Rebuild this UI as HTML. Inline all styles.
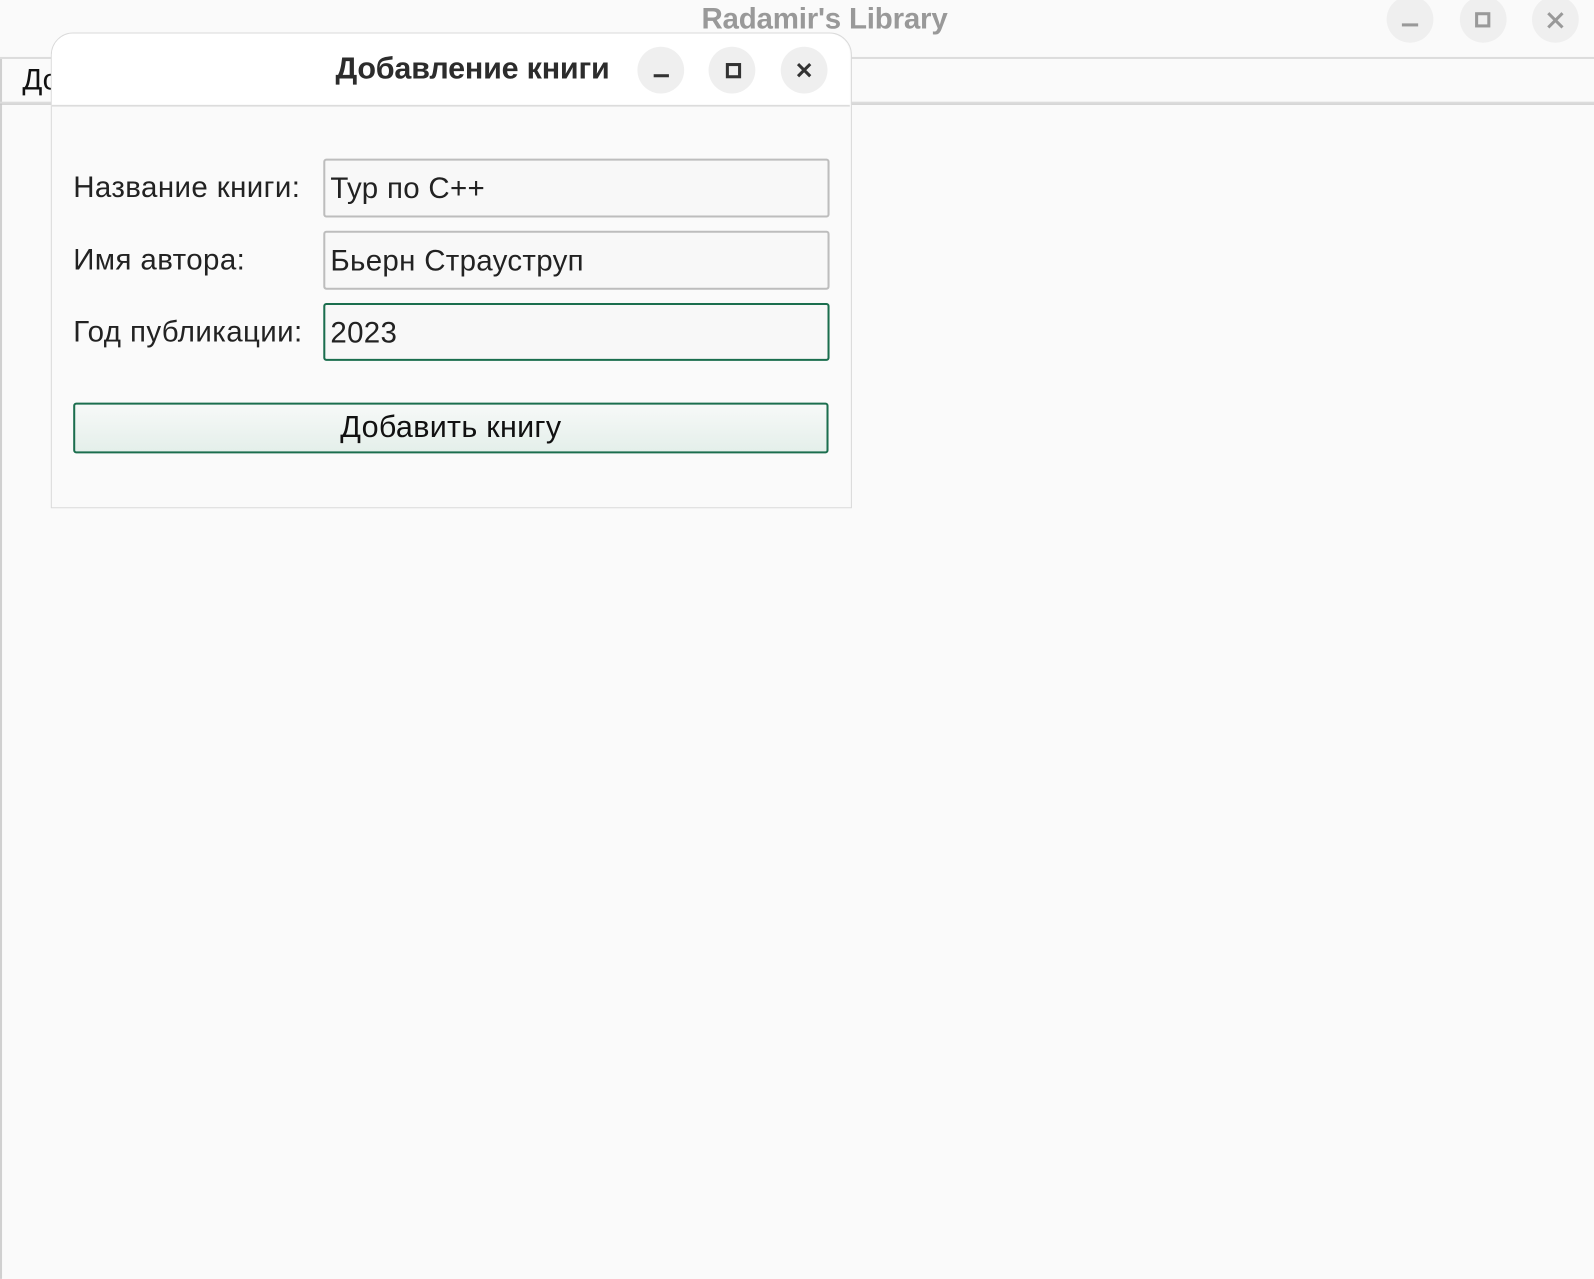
<!DOCTYPE html>
<html><head><meta charset="utf-8"><style>
body{margin:0;width:1594px;height:1258px;background:#fafafa;position:relative;overflow:hidden;font-family:"Liberation Sans","DejaVu Sans",sans-serif;color:#222}
#w{position:absolute;left:0;top:0;width:1568px;height:1238px;transform:scale(1.0166);transform-origin:0 0}
.abs{position:absolute}
.circ{position:absolute;width:46px;height:46px;border-radius:50%;background:#efefef}
.lbl{position:absolute;left:72px;font-size:29px;letter-spacing:0.4px;color:#222}
.inp{position:absolute;left:318px;width:494px;height:54px;border:2px solid #bdbdbd;border-radius:3px;background:#f8f8f8;box-sizing:content-box}
.inp span{position:absolute;left:5px;top:12px;font-size:29px;letter-spacing:0.3px;color:#222}
</style></head><body><div id="w">
<div class="abs" style="left:0;top:0;width:2px;height:1258px;background:#d0d0d0"></div>
<div class="abs" style="left:0;top:0;width:1594px;height:56px;background:#fafafa;border-bottom:2px solid #dcdcdc"></div>
<div class="abs" style="left:690px;top:3px;font-size:29px;font-weight:bold;color:#999;letter-spacing:-0.2px">Radamir's Library</div>
<div class="circ" style="left:1364px;top:-4px"></div><div class="abs" style="left:1379px;top:23px;width:16px;height:3px;background:#999"></div>
<div class="circ" style="left:1436px;top:-4px"></div><div class="abs" style="left:1451px;top:12px;width:9px;height:9px;border:3px solid #999"></div>
<div class="circ" style="left:1507px;top:-4px"></div>
<svg class="abs" style="left:1520px;top:10px" width="20" height="20"><path d="M3 3L17 17M17 3L3 17" stroke="#999" stroke-width="3"/></svg>
<div class="abs" style="left:0;top:100px;width:1594px;height:2px;background:#dcdcdc"></div>
<div class="abs" style="left:0;top:102px;width:1594px;height:1px;background:#c8c8c8"></div>
<div class="abs" style="left:22px;top:63px;font-size:29px;color:#111">До</div>
<div class="abs" style="left:50px;top:32px;width:786px;height:466px;background:#fafafa;border:1px solid #dadada;border-radius:22px 22px 0 0"></div>
<div class="abs" style="left:51px;top:33px;width:785px;height:70px;background:#fff;border-bottom:2px solid #dcdcdc;border-radius:21px 21px 0 0"></div>
<div class="abs" style="left:330px;top:51px;font-size:30px;font-weight:bold;color:#2c2c2c;letter-spacing:-0.2px">Добавление книги</div>
<div class="circ" style="left:627px;top:46px"></div><div class="abs" style="left:643px;top:73px;width:15px;height:3px;background:#333"></div>
<div class="circ" style="left:697px;top:46px"></div><div class="abs" style="left:714px;top:62px;width:9px;height:9px;border:3px solid #333"></div>
<div class="circ" style="left:768px;top:46px"></div>
<svg class="abs" style="left:783px;top:61px" width="16" height="16"><path d="M2 2L14 14M14 2L2 14" stroke="#333" stroke-width="3"/></svg>
<div class="lbl" style="top:169px">Название книги:</div>
<div class="inp" style="top:156px;height:54px"><span>Тур по С++</span></div>
<div class="lbl" style="top:240px">Имя автора:</div>
<div class="inp" style="top:227px;height:54px"><span>Бьерн Страуструп</span></div>
<div class="lbl" style="top:311px">Год публикации:</div>
<div class="inp" style="top:298px;height:53px;border-color:#1b6e4e"><span>2023</span></div>
<div class="abs" style="left:72px;top:396px;width:739px;height:46px;border:2px solid #1b6e4e;border-radius:3px;background:linear-gradient(#f7f9f8,#e4efea)"></div>
<div class="abs" style="left:72px;top:404px;width:743px;text-align:center;font-size:30px;color:#111;letter-spacing:0.3px">Добавить книгу</div>
</div></body></html>
